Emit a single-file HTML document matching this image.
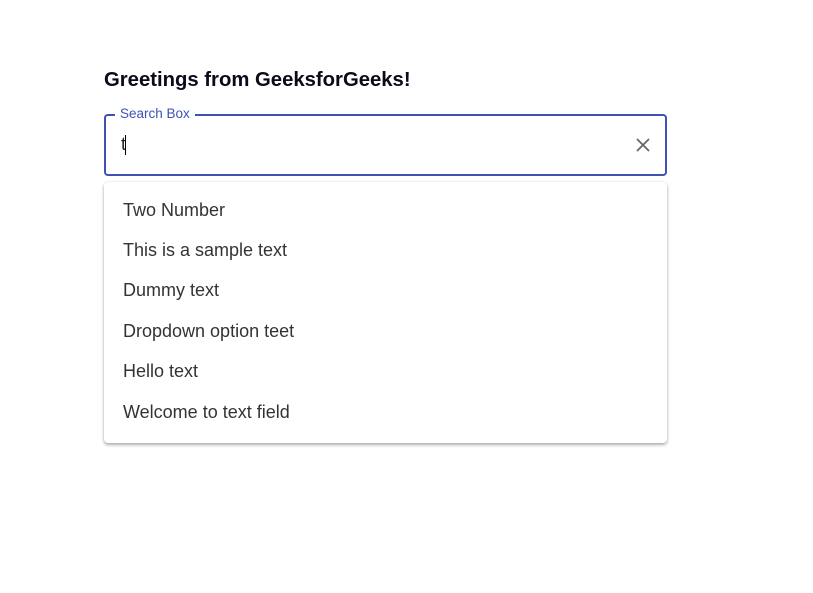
<!DOCTYPE html>
<html><head><style>
body{margin:0;width:813px;height:593px;background:#fff;font-family:"Liberation Sans",sans-serif;position:relative;overflow:hidden}
h1{position:absolute;left:104px;top:69px;margin:0;font-size:20.3px;font-weight:bold;color:#0a0a1a;font-family:"Liberation Sans",sans-serif}
.box{position:absolute;left:104px;top:114px;width:559px;height:58px;border:2px solid #3f51b5;border-radius:4px}
.lbl{position:absolute;left:115px;top:106px;padding:0 5px;background:#fff;color:#3f51b5;font-size:13.5px}
.val{position:absolute;left:121px;top:134px;font-size:18px;color:#222}
.cur{position:absolute;left:125px;top:135px;width:1px;height:20px;background:#000}
.x{position:absolute;left:635px;top:137px}
.menu{position:absolute;left:104px;top:182px;width:563px;height:261px;border-radius:4px;box-shadow:0 2px 3px rgba(0,0,0,.3),0 0 2px rgba(0,0,0,.12);background:#fff}
.it{position:absolute;left:19px;font-size:18px;color:#333}
</style></head><body>
<h1>Greetings from GeeksforGeeks!</h1>
<div class="box"></div>
<div class="lbl">Search Box</div>
<div class="val">t</div><div class="cur"></div>
<svg class="x" width="16" height="16" viewBox="0 0 16 16"><path d="M2 2L14 14M14 2L2 14" stroke="#666" stroke-width="1.8"/></svg>
<div class="menu">
<div class="it" style="top:18px">Two Number</div>
<div class="it" style="top:58px">This is a sample text</div>
<div class="it" style="top:98px">Dummy text</div>
<div class="it" style="top:139px">Dropdown option teet</div>
<div class="it" style="top:179px">Hello text</div>
<div class="it" style="top:220px">Welcome to text field</div>
</div>
</body></html>
